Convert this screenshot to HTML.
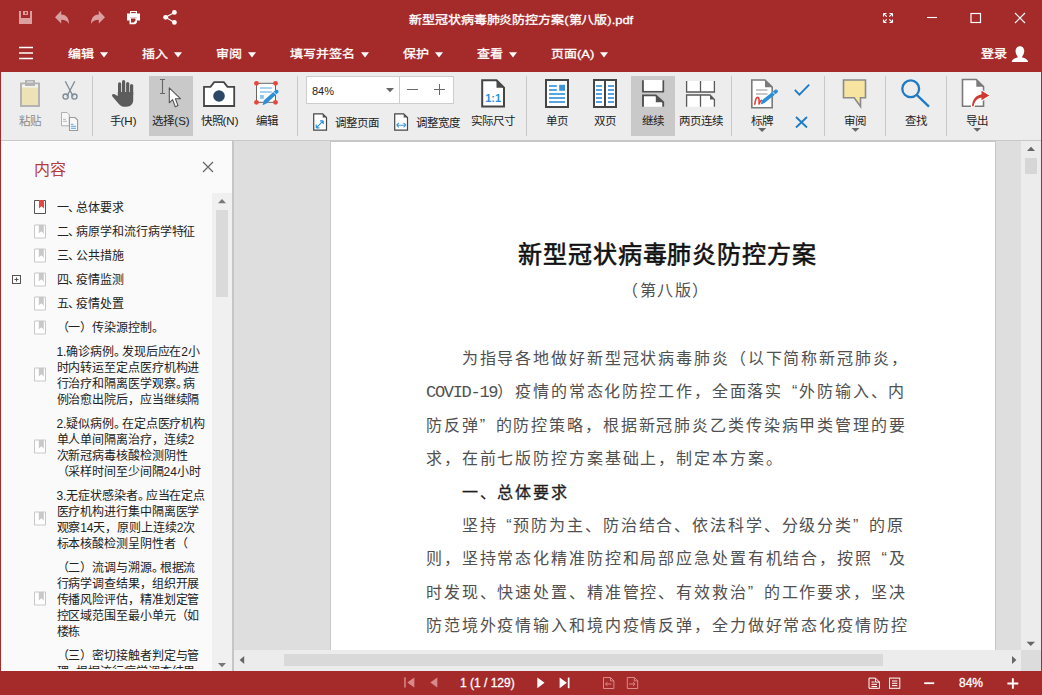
<!DOCTYPE html>
<html lang="zh-CN">
<head>
<meta charset="utf-8">
<style>
*{margin:0;padding:0;box-sizing:border-box}
html,body{width:1042px;height:695px;overflow:hidden}
body{position:relative;background:#a52b2b;font-family:"Liberation Sans",sans-serif;color:#222}
.a{position:absolute}
.w{color:#fff}
#title{left:0;top:0;width:1042px;height:36px}
#ttl{left:0;width:1042px;top:8.5px;transform:scaleY(0.9);transform-origin:50% 55%;text-align:center;font-size:13px;font-weight:normal;-webkit-text-stroke:0.35px #fff;color:#fff;letter-spacing:-0.05px}
#menu{left:0;top:36px;width:1042px;height:36px}
.mi{top:44px;transform:scaleY(0.86);transform-origin:50% 55%;font-size:13px;font-weight:normal;-webkit-text-stroke:0.35px #fff;color:#fff;white-space:nowrap}
.caret{display:inline-block;width:0;height:0;border-left:4.5px solid transparent;border-right:4.5px solid transparent;border-top:6px solid #fff;margin-left:6px;vertical-align:1px}
#tb{left:1px;top:72px;width:1040px;height:68px;background:#ededed}
#tbline{left:1px;top:140px;width:1040px;height:1px;background:#c8c8c8}
.sep{width:1px;background:#c9c9c9}
.lbl{top:114px;width:80px;text-align:center;font-size:11.5px;line-height:14px;color:#222;white-space:nowrap}
#side{left:1px;top:141px;width:231px;height:530px;background:#fafafa}
#split{left:232px;top:141px;width:2px;height:530px;background:#c6c6c6}
#gray{left:234px;top:141px;width:787px;height:509px;background:#dedede}
#page{left:331px;top:141px;width:664px;height:509px;background:#fff}
#vs{left:1021px;top:141px;width:20px;height:530px;background:#ececec}
#hs{left:234px;top:650px;width:787px;height:21px;background:#ececec}
#status{left:0;top:671px;width:1042px;height:24px}
.doc{font-size:16px;line-height:24px;color:#505050;white-space:nowrap;letter-spacing:1.87px}
.dn{margin-right:-4px}
.hd{font-weight:normal;color:#1e1e1e;-webkit-text-stroke:0.3px #1e1e1e}
.lat{font-family:"Liberation Mono",monospace;font-size:17px;letter-spacing:-1.3px}
.ql{display:inline-block;width:16px;text-align:right}
.qr{display:inline-block;width:16px;text-align:left}
.st{font-size:12px;line-height:16px;color:#fff;-webkit-text-stroke:0.3px #fff;white-space:nowrap}
.ttl2{font-size:24px;line-height:32px;font-weight:normal;-webkit-text-stroke:0.6px #111;color:#111;letter-spacing:0.85px;white-space:nowrap}
.si{position:absolute;left:56.5px;font-size:12px;line-height:16px;letter-spacing:-0.1px;color:#222;white-space:nowrap}
</style>
</head>
<body>
<!-- title bar -->
<div class="a" id="ttl">新型冠状病毒肺炎防控方案(第八版).pdf</div>

<!-- menu -->
<div class="a mi" style="left:68px">编辑<span class="caret"></span></div>
<div class="a mi" style="left:142px">插入<span class="caret"></span></div>
<div class="a mi" style="left:216px">审阅<span class="caret"></span></div>
<div class="a mi" style="left:290px">填写并签名<span class="caret"></span></div>
<div class="a mi" style="left:403px">保护<span class="caret"></span></div>
<div class="a mi" style="left:477px">查看<span class="caret"></span></div>
<div class="a mi" style="left:551px">页面(A)<span class="caret"></span></div>
<div class="a mi" style="left:981px">登录</div>


<!-- title icons -->
<svg class="a" style="left:0;top:0" width="1042" height="72">
 <g fill="#dc9f9f">
  <rect x="19" y="11" width="2" height="13"/><rect x="30" y="11" width="2" height="13"/><rect x="19" y="18" width="13" height="6"/>
  <path d="M23 11h5v4h-5z M25 12v2h1.6v-2z" fill-rule="evenodd"/>
 </g>
 <path fill="#dc9f9f" d="M55 17.2 L61.2 10.8 L61.2 14.6 C65.5 14.6 69 17.5 69 24 C67.5 20.8 65 19.8 61.2 19.8 L61.2 23.6 Z"/>
 <path fill="#dc9f9f" d="M105 17.2 L98.8 10.8 L98.8 14.6 C94.5 14.6 91 17.5 91 24 C92.5 20.8 95 19.8 98.8 19.8 L98.8 23.6 Z"/>
 <g fill="#fff">
  <path fill-rule="evenodd" d="M130 11h7v3h-7z M131.2 12v1.2h4.6v-1.2z"/>
  <path d="M127 13.5h13v7h-3v-3h-7v3h-3z"/>
  <path fill-rule="evenodd" d="M129.5 17.5h7.5v5l-1.8 1.8h-5.7z M131 18.6v3.9h2.6l1.9-1.9v-2z"/>
 </g>
 <g fill="#fff" stroke="#fff">
  <circle cx="165.6" cy="17.3" r="2.4" stroke="none"/>
  <circle cx="174.4" cy="12.4" r="2.4" stroke="none"/>
  <circle cx="174.4" cy="22.4" r="2.4" stroke="none"/>
  <path d="M165.6 17.3 L174.4 12.4 M165.6 17.3 L174.4 22.4" stroke-width="1.1" fill="none"/>
 </g>
 <g stroke="#fff" fill="none" stroke-width="1.1">
  <path d="M883.5 13.5 l3.2 3.2 M883.5 13.5 h3 M883.5 13.5 v3 M892.5 13.5 l-3.2 3.2 M892.5 13.5 h-3 M892.5 13.5 v3 M883.5 22.5 l3.2 -3.2 M883.5 22.5 h3 M883.5 22.5 v-3 M892.5 22.5 l-3.2 -3.2 M892.5 22.5 h-3 M892.5 22.5 v-3"/>
  <path d="M927 17.5 h10"/>
  <rect x="971" y="13.5" width="9.5" height="9" stroke-width="1.2"/>
  <path d="M1015 13 L1025 23 M1025 13 L1015 23" stroke-width="1.2"/>
  <path d="M19 47.5 h14 M19 53 h14 M19 58.5 h14" stroke-width="1.3"/>
 </g>
 <path fill="#fff" d="M1019.8 46.3 C1016.6 46.3 1015.3 49 1015.6 51.8 C1015.8 54 1016.8 55.6 1017.6 56.4 L1017.6 57.4 C1014.8 58 1012 59.3 1011.6 62 L1028.2 62 C1027.8 59.3 1025 58 1022.2 57.4 L1022.2 56.4 C1023 55.6 1024 54 1024.2 51.8 C1024.5 49 1023.2 46.3 1019.8 46.3 Z"/>
</svg>

<!-- toolbar -->
<div class="a" id="tb"></div>
<div class="a" id="tbline"></div>

<div class="a" style="left:149px;top:76px;width:44px;height:60px;background:#c9c9c9"></div>
<div class="a" style="left:631px;top:76px;width:44px;height:60px;background:#c9c9c9"></div>
<div class="a sep" style="left:92px;top:76px;height:60px"></div>
<div class="a sep" style="left:297px;top:76px;height:60px"></div>
<div class="a sep" style="left:526px;top:76px;height:60px"></div>
<div class="a sep" style="left:731px;top:76px;height:60px"></div>
<div class="a sep" style="left:824px;top:76px;height:60px"></div>
<div class="a sep" style="left:885px;top:76px;height:60px"></div>
<div class="a sep" style="left:946px;top:76px;height:60px"></div>
<!-- zoom box -->
<div class="a" style="left:306px;top:76px;width:148px;height:28px;background:#fff;border:1px solid #cdcdcd"></div>
<div class="a" style="left:399px;top:77px;width:1px;height:26px;background:#cdcdcd"></div>
<div class="a" style="left:312px;top:84px;font-size:11px;line-height:14px;color:#222">84%</div>
<svg class="a" style="left:0;top:72px" width="1042" height="68" viewBox="0 72 1042 68">
 <!-- paste -->
 <rect x="21" y="83.5" width="18" height="22.5" fill="#ede2b5" stroke="#b3b3b3" stroke-width="2"/>
 <rect x="22" y="84.5" width="16" height="3" fill="#f3f3f3"/>
 <path fill-rule="evenodd" fill="#b3b3b3" d="M25 80h10v6h-10z M27 81.6v1.8h6v-1.8z"/>
 <!-- scissors -->
 <g stroke="#7b8a97" fill="none" stroke-width="1.3">
  <path d="M65.3 81.2 L73.2 96.5 M74.8 81.2 L66.8 96.5"/>
  <circle cx="65.6" cy="96.6" r="2.6"/><circle cx="74.4" cy="96.6" r="2.6"/>
 </g>
 <!-- copy -->
 <path d="M61.5 112.5 h5.5 l2.3 2.3 v11 h-7.8 z" fill="#f8f8f8" stroke="#b0b0b0" stroke-width="1"/>
 <g stroke="#b0b0b0" stroke-width="0.9"><path d="M63 119.3h3 M63 121.3h4"/></g>
 <path d="M69.5 117.5 h5.5 l2.6 2.6 v10.4 h-8.1 z" fill="#f8f8f8" stroke="#9a9a9a" stroke-width="1.1"/>
 <path d="M71 124.3h2.5 M71 126.3h5 M71 128.3h5" stroke="#5aa6e0" stroke-width="1"/>
 <!-- hand -->
 <g fill="#5c5c5c">
  <rect x="118" y="82.2" width="3.2" height="14" rx="1.6"/>
  <rect x="122" y="80" width="3.2" height="16" rx="1.6"/>
  <rect x="126.1" y="82" width="3.2" height="14" rx="1.6"/>
  <rect x="130" y="84" width="3.2" height="12" rx="1.6"/>
  <path d="M117.8 92 L133.2 92 L133.2 100 C133.2 104 130.5 106.7 126.5 106.7 L124 106.7 C121.5 106.7 120 105.5 118.4 103.5 L112.4 96.6 C111.4 95.4 112.4 93.6 114 94.1 L117.8 96 Z"/>
 </g>
 <!-- select -->
 <path d="M160 79.5h5 M162.5 79.5v14 M160 93.5h5" stroke="#666" stroke-width="1.1" fill="none"/>
 <path d="M169.3 87.8 L169.3 102.8 L172.6 99.6 L175.3 106.8 L178 105.6 L175.4 98.8 L180.6 98.8 Z" fill="#fff" stroke="#555" stroke-width="1.1" stroke-linejoin="round"/>
 <!-- camera -->
 <path d="M204 86.8 H210.5 L214.2 82.2 H223.8 L227.5 86.8 H234.2 V106 H204 Z" fill="#fff" stroke="#454545" stroke-width="1.8" stroke-linejoin="miter"/>
 <circle cx="219" cy="96" r="5.8" fill="#2d4866"/>
 <!-- edit -->
 <rect x="256.5" y="83.3" width="19" height="19" fill="#fff" stroke="#666" stroke-width="1"/>
 <path d="M260 88h11.8 M260 92h11.8" stroke="#8ec3ea" stroke-width="1.7"/>
 <rect x="260" y="95" width="3.8" height="3.8" fill="#8ec3ea"/>
 <path d="M262.6 105.2 L263.8 100.6 L275.3 90.2 C276.2 89.4 277.6 89.5 278.2 90.3 C278.8 91.1 278.7 92.3 277.9 93 L266.5 103.5 Z" fill="#2d8fd9"/>
 <path d="M273.2 91.6 L276.6 95" stroke="#fff" stroke-width="0.8"/>
 <g fill="#e8463c"><circle cx="256.5" cy="83.3" r="2.4"/><circle cx="275.5" cy="83.3" r="2.4"/><circle cx="256.5" cy="102.3" r="2.4"/><circle cx="275.5" cy="102.3" r="2.4"/></g>
 <!-- zoom box parts -->
 <path d="M386 88 h8 l-4 4.2 z" fill="#666"/>
 <path d="M407 89.5h11 M434 89.5h11 M439.5 84v11" stroke="#6a6a6a" stroke-width="1"/>
 <!-- fit page -->
 <path d="M313.7 113.8 h9 l3.8 3.8 v12.6 h-12.8 z" fill="#fff" stroke="#454545" stroke-width="1.2"/>
 <path d="M322.7 113.8 v3.8 h3.8 z" fill="#555"/>
 <path d="M316.2 127.8 L323.2 120.8 M316.2 127.8 v-3.2 M316.2 127.8 h3.2 M323.2 120.8 h-3.2 M323.2 120.8 v3.2" stroke="#2a93e0" stroke-width="1.2" fill="none"/>
 <!-- fit width -->
 <path d="M394.7 113.8 h9 l3.8 3.8 v12.6 h-12.8 z" fill="#fff" stroke="#454545" stroke-width="1.2"/>
 <path d="M403.7 113.8 v3.8 h3.8 z" fill="#555"/>
 <path d="M396.5 125.2 h9.5 M396.5 125.2 l2.4 -2.2 M396.5 125.2 l2.4 2.2 M406 125.2 l-2.4 -2.2 M406 125.2 l-2.4 2.2" stroke="#3b9ae4" stroke-width="1.1" fill="none"/>
 <!-- actual size -->
 <path d="M482.2 80.2 H496.5 L504 87.7 V106.6 H482.2 Z" fill="#fff" stroke="#454545" stroke-width="2"/>
 <path d="M496.5 80.2 V87.7 H504 Z" fill="#4a4a4a"/>
 <text x="493.2" y="102" font-family="Liberation Sans" font-weight="bold" font-size="11" fill="#2a8fde" text-anchor="middle">1:1</text>
 <!-- single page -->
 <rect x="546" y="80" width="22" height="27" fill="#fff" stroke="#454545" stroke-width="2"/>
 <g stroke="#1f86d6" stroke-width="1.7"><path d="M549 86h7.8 M549 90h7.8 M549 94h16 M549 98h16 M549 102h16"/></g>
 <rect x="559.2" y="84.8" width="5.8" height="6" fill="#3b93d8"/>
 <!-- double page -->
 <rect x="594" y="80" width="22" height="27" fill="#fff" stroke="#454545" stroke-width="2"/>
 <path d="M605 80v27" stroke="#454545" stroke-width="2"/>
 <g stroke="#1f86d6" stroke-width="1.7"><path d="M596 86h6 M596 90h6 M596 94h6 M596 98h6 M596 102h6 M608 86h6 M608 90h6 M608 94h6 M608 98h6 M608 102h6"/></g>
 <!-- continuous -->
 <path d="M643 80.2 V91.6 H663.2 V80.2" fill="#fff" stroke="#505050" stroke-width="1.9"/>
 <rect x="643.9" y="80" width="18.4" height="10.7" fill="#fff"/>
 <path d="M643 106.8 V95.4 H655.8 L663.2 102.2 V106.8" fill="#fff" stroke="#505050" stroke-width="1.9"/>
 <path d="M655.8 95.4 V102.2 H663.2 Z" fill="#505050"/>
 <!-- two page continuous -->
 <path d="M686.6 81 V92 H714.4 V81 M700.5 81 V92" fill="#fff" stroke="#5a5a5a" stroke-width="1.3"/>
 <path d="M686.6 106.8 V95 H710 L714.4 99.4 V106.8 M700.5 95 V106.8" fill="#fff" stroke="#5a5a5a" stroke-width="1.3"/>
 <path d="M710 95 V99.4 H714.4 Z" fill="#5a5a5a"/>
 <!-- stamp/sign -->
 <path d="M751.8 80 H765 L772.2 87.2 V107.7 H751.8 Z" fill="#fff" stroke="#7a7a7a" stroke-width="1.6"/>
 <path d="M765 80 V87.2 H772.2 Z" fill="#7a7a7a"/>
 <path d="M756 90h11.5 M756 94h11.5" stroke="#b5b5b5" stroke-width="1.4"/>
 <path d="M754.8 104.2 C755.3 100.5 756 97.4 757.6 97.4 C759.4 97.4 759.2 101.5 759 104 C759.6 102.2 760.4 100.8 761.4 100.4" stroke="#e5403a" stroke-width="1.6" fill="none" stroke-linecap="round" stroke-linejoin="round"/>
 <path d="M760.8 104.5 L761.8 100.4 L774.8 90 C775.7 89.3 777 89.4 777.6 90.2 C778.2 91 778.1 92.1 777.3 92.8 L764.5 103 Z" fill="#2d8fd9"/>
 <path d="M772.6 91.9 L775.6 95.2" stroke="#fff" stroke-width="0.8"/>
 <path d="M758 128h8.2l-4.1 4z" fill="#666"/>
 <path d="M794.8 89.8 L799.4 94.6 L809.2 84.6" stroke="#1f7ac4" stroke-width="1.8" fill="none"/>
 <path d="M796 117 L807 127.5 M807 117 L796 127.5" stroke="#1f7ac4" stroke-width="1.8" fill="none"/>
 <!-- comment -->
 <path d="M843.5 80 H865.5 V97.8 H860.5 V106.5 L854.2 97.8 H843.5 Z" fill="#f6e4a0" stroke="#8a8a8a" stroke-width="1.6" stroke-linejoin="miter"/>
 <path d="M851.5 128h8l-4 3.8z" fill="#666"/>
 <!-- search -->
 <circle cx="910.7" cy="88.8" r="8.4" fill="none" stroke="#1f7ac4" stroke-width="2.3"/>
 <path d="M916.7 94.8 L929 106.6" stroke="#1f7ac4" stroke-width="2.3"/>
 <!-- export -->
 <path d="M962.5 79.5 H976.3 L983.5 86.7 V106.3 H962.5 Z" fill="#fff" stroke="#7a7a7a" stroke-width="1.6"/>
 <path d="M976.3 79.5 V86.7 H983.5 Z" fill="#7a7a7a"/>
 <path d="M972 106.2 C972.3 99.5 976 94.8 982.2 94.2 L982.2 97.6 C977.6 97.8 974.5 101.2 973.6 106.2 Z M981.5 90.8 L989.3 95.6 L981.5 100.2 Z" fill="#fff" stroke="#fff" stroke-width="2.2" stroke-linejoin="round"/>
 <path d="M972 106.2 C972.3 99.5 976 94.8 982.2 94.2 L982.2 97.6 C977.6 97.8 974.5 101.2 973.6 106.2 Z" fill="#d0392f"/>
 <path d="M981.5 90.8 L989.3 95.6 L981.5 100.2 Z" fill="#d0392f"/>
 <path d="M973.3 128h7.7l-3.85 3.8z" fill="#666"/>
</svg>
<div class="a lbl" style="left:-10.3px;color:#8a8a8a">粘贴</div>
<div class="a lbl" style="left:83.0px">手(H)</div>
<div class="a lbl" style="left:131.0px">选择(S)</div>
<div class="a lbl" style="left:179.5px">快照(N)</div>
<div class="a lbl" style="left:227.0px">编辑</div>
<div class="a lbl" style="left:453.0px">实际尺寸</div>
<div class="a lbl" style="left:517.0px">单页</div>
<div class="a lbl" style="left:564.5px">双页</div>
<div class="a lbl" style="left:613.0px">继续</div>
<div class="a lbl" style="left:661.2px">两页连续</div>
<div class="a lbl" style="left:722.4px">标牌</div>
<div class="a lbl" style="left:815.2px">审阅</div>
<div class="a lbl" style="left:876.0px">查找</div>
<div class="a lbl" style="left:936.7px">导出</div>
<div class="a lbl" style="left:334.5px;top:116px;width:auto;text-align:left">调整页面</div>
<div class="a lbl" style="left:415.7px;top:116px;width:auto;text-align:left">调整宽度</div>


<!-- content -->
<div class="a" id="side"></div>
<div class="a" id="split"></div>
<div class="a" id="gray"></div>
<div class="a" id="page"></div>
<div class="a" id="vs"></div>
<div class="a" id="hs"></div>


<!-- scrollbars / page edges -->
<div class="a" style="left:330px;top:141px;width:1px;height:509px;background:#c9c9c9"></div>
<div class="a" style="left:330px;top:141px;width:666px;height:1px;background:#c6c6c6"></div>
<div class="a" style="left:995px;top:141px;width:1px;height:509px;background:#c9c9c9"></div>
<div class="a" style="left:1025px;top:158px;width:12px;height:16px;background:#d6d6d6"></div>
<div class="a" style="left:284px;top:654px;width:599px;height:12px;background:#d9d9d9"></div>
<div class="a" style="left:1021px;top:650px;width:20px;height:21px;background:#dcdcdc"></div>
<svg class="a" style="left:0;top:0" width="1042" height="695">
 <path d="M1027 151 h8 l-4 -4.2 z" fill="#666"/>
 <path d="M1026.5 641.8 h8.5 l-4.25 4.2 z" fill="#666"/>
 <path d="M244.2 656 v8 l-4.6 -4 z" fill="#666"/>
 <path d="M1012 656 v8 l4.4 -4 z" fill="#666"/>
 <!-- status bar -->
 <g fill="#d9898a">
  <rect x="404.2" y="677.4" width="1.5" height="10.1"/>
  <path d="M414.3 677.4 v10.1 l-7 -5.05 z"/>
  <path d="M437.3 677.4 v10.1 l-7 -5.05 z"/>
 </g>
 <g fill="#fff">
  <path d="M537.3 677.5 v10.7 l7.2 -5.35 z"/>
  <path d="M559.6 677.5 v10.7 l7.2 -5.35 z"/>
  <rect x="567.8" y="677.5" width="1.7" height="10.7"/>
 </g>
 <g fill="none" stroke="#d9898a" stroke-width="1">
  <path d="M603.5 677.5 h7 l3.4 3.4 v7.6 h-10.4 z M610.5 677.5 v3.4 h3.4"/>
  <path d="M611.5 684 h-6 M605.5 684 l2 -1.8 M605.5 684 l2 1.8"/>
  <path d="M627.3 677.5 h7 l3.4 3.4 v7.6 h-10.4 z M634.3 677.5 v3.4 h3.4"/>
  <path d="M629 684 h6 M635 684 l-2 -1.8 M635 684 l-2 1.8"/>
 </g>
 <g fill="none" stroke="#fff" stroke-width="1">
  <path d="M869 678.1 h6.5 l4 4 v6.2 h-10.5 z M875.5 678.1 v4 h4"/>
  <path d="M871.5 682h3 M871.5 684.3h5.5 M871.5 686.5h5.5"/>
  <rect x="889.5" y="678.1" width="10.3" height="10.2"/>
  <path d="M892 681h5.3 M892 683.3h5.3 M892 685.6h5.3"/>
 </g>
 <path d="M924.2 683.2 h10" stroke="#fff" stroke-width="1.8"/>
 <path d="M1007.4 683.5 h10.9 M1012.85 678.3 v10.5" stroke="#fff" stroke-width="1.9"/>
</svg>
<div class="a st" style="left:460px;top:675px">1 (1 / 129)</div>
<div class="a st" style="left:959px;top:675px">84%</div>

<!-- sidebar -->
<div class="a" style="left:1px;top:141px;width:231px;height:1px;background:#fdfdfd"></div>
<div class="a" style="left:34px;top:158.5px;font-size:16px;line-height:22px;color:#b43c3c">内容</div>
<svg class="a" style="left:200px;top:159px" width="16" height="16"><path d="M3 3 L13 13 M13 3 L3 13" stroke="#666" stroke-width="1.2"/></svg>
<div class="a" style="left:212px;top:193px;width:20px;height:478px;background:#f0f0f0"></div>
<div class="a" style="left:216px;top:210px;width:12px;height:87px;background:#dadada"></div>
<svg class="a" style="left:212px;top:193px" width="20" height="478">
 <path d="M6 10.2 h8 l-4 -4.3 z" fill="#777"/>
 <path d="M6 470 h8 l-4 4.2 z" fill="#777"/>
</svg>
<svg class="a" style="left:0;top:141px" width="212" height="530">
 <defs>
  <g id="bm"><path d="M0.5 0.5 h11 v13 h-11 z" fill="#fff" stroke="#c8c8c8" stroke-width="1"/><path d="M4.8 0.5 h5 v8.6 l-2.5 -2.4 l-2.5 2.4 z" fill="#c8c8c8"/></g>
 </defs>
 <g transform="translate(34,59)"><path d="M0.5 0.5 h11 v13 h-11 z" fill="#fff" stroke="#555" stroke-width="1"/><path d="M5 0 h5 v8.6 l-2.5 -2.4 l-2.5 2.4 z" fill="#e8463c"/></g>
 <use href="#bm" x="34" y="83.5"/>
 <use href="#bm" x="34" y="107.5"/>
 <use href="#bm" x="34" y="131.5"/>
 <use href="#bm" x="34" y="155.5"/>
 <use href="#bm" x="34" y="179.5"/>
 <use href="#bm" x="34" y="226.5"/>
 <use href="#bm" x="34" y="298.5"/>
 <use href="#bm" x="34" y="370.5"/>
 <use href="#bm" x="34" y="450.5"/>
 <rect x="12.5" y="134.5" width="8" height="8" fill="none" stroke="#555" stroke-width="1"/>
 <path d="M14.5 138.5h4 M16.5 136.5v4" stroke="#555" stroke-width="1"/>
</svg>
<div class="a" style="left:0;top:141px;width:212px;height:528px;overflow:hidden">
<div class="si" style="top:59px">一<span class="dn">、</span>总体要求</div>
<div class="si" style="top:83px">二<span class="dn">、</span>病原学和流行病学特征</div>
<div class="si" style="top:107px">三<span class="dn">、</span>公共措施</div>
<div class="si" style="top:131px">四<span class="dn">、</span>疫情监测</div>
<div class="si" style="top:155px">五<span class="dn">、</span>疫情处置</div>
<div class="si" style="top:179px">（一）传染源控制。</div>
<div class="si" style="top:203px">1.确诊病例<span class="dn">。</span>发现后应在2小<br>时内转运至定点医疗机构进<br>行治疗和隔离医学观察<span class="dn">。</span>病<br>例治愈出院后，应当继续隔</div>
<div class="si" style="top:275px">2.疑似病例<span class="dn">。</span>在定点医疗机构<br>单人单间隔离治疗，连续2<br>次新冠病毒核酸检测阴性<br>（采样时间至少间隔24小时</div>
<div class="si" style="top:347px">3.无症状感染者<span class="dn">。</span>应当在定点<br>医疗机构进行集中隔离医学<br>观察14天，原则上连续2次<br>标本核酸检测呈阴性者（</div>
<div class="si" style="top:419px">（二）流调与溯源<span class="dn">。</span>根据流<br>行病学调查结果，组织开展<br>传播风险评估，精准划定管<br>控区域范围至最小单元（如<br>楼栋</div>
<div class="si" style="top:507px">（三）密切接触者判定与管<br>理<span class="dn">。</span>根据流行病学调查结果</div>
</div>

<!-- page -->
<div class="a" style="left:0;top:0;width:1042px;text-align:center"></div>
<div class="a ttl2" style="left:335.5px;top:238.5px;width:664px;text-align:center">新型冠状病毒肺炎防控方案</div>
<div class="a doc" style="left:622px;top:279px;letter-spacing:1.5px">（第八版）</div>
<div class="a doc" style="left:426px;top:347.00px">　　为指导各地做好新型冠状病毒肺炎（以下简称新冠肺炎，</div>
<div class="a doc" style="left:426px;top:380.40px"><span class="lat">COVID-19</span>）疫情的常态化防控工作，全面落实<span class="ql">“</span>外防输入、内</div>
<div class="a doc" style="left:426px;top:413.80px">防反弹<span class="qr">”</span>的防控策略，根据新冠肺炎乙类传染病甲类管理的要</div>
<div class="a doc" style="left:426px;top:447.20px">求，在前七版防控方案基础上，制定本方案。</div>
<div class="a doc hd" style="left:426px;top:480.60px">　　一、总体要求</div>
<div class="a doc" style="left:426px;top:514.00px">　　坚持<span class="ql">“</span>预防为主、防治结合、依法科学、分级分类<span class="qr">”</span>的原</div>
<div class="a doc" style="left:426px;top:547.40px">则，坚持常态化精准防控和局部应急处置有机结合，按照<span class="ql">“</span>及</div>
<div class="a doc" style="left:426px;top:580.80px">时发现、快速处置、精准管控、有效救治<span class="qr">”</span>的工作要求，坚决</div>
<div class="a doc" style="left:426px;top:614.20px">防范境外疫情输入和境内疫情反弹，全力做好常态化疫情防控</div>


</body>
</html>
